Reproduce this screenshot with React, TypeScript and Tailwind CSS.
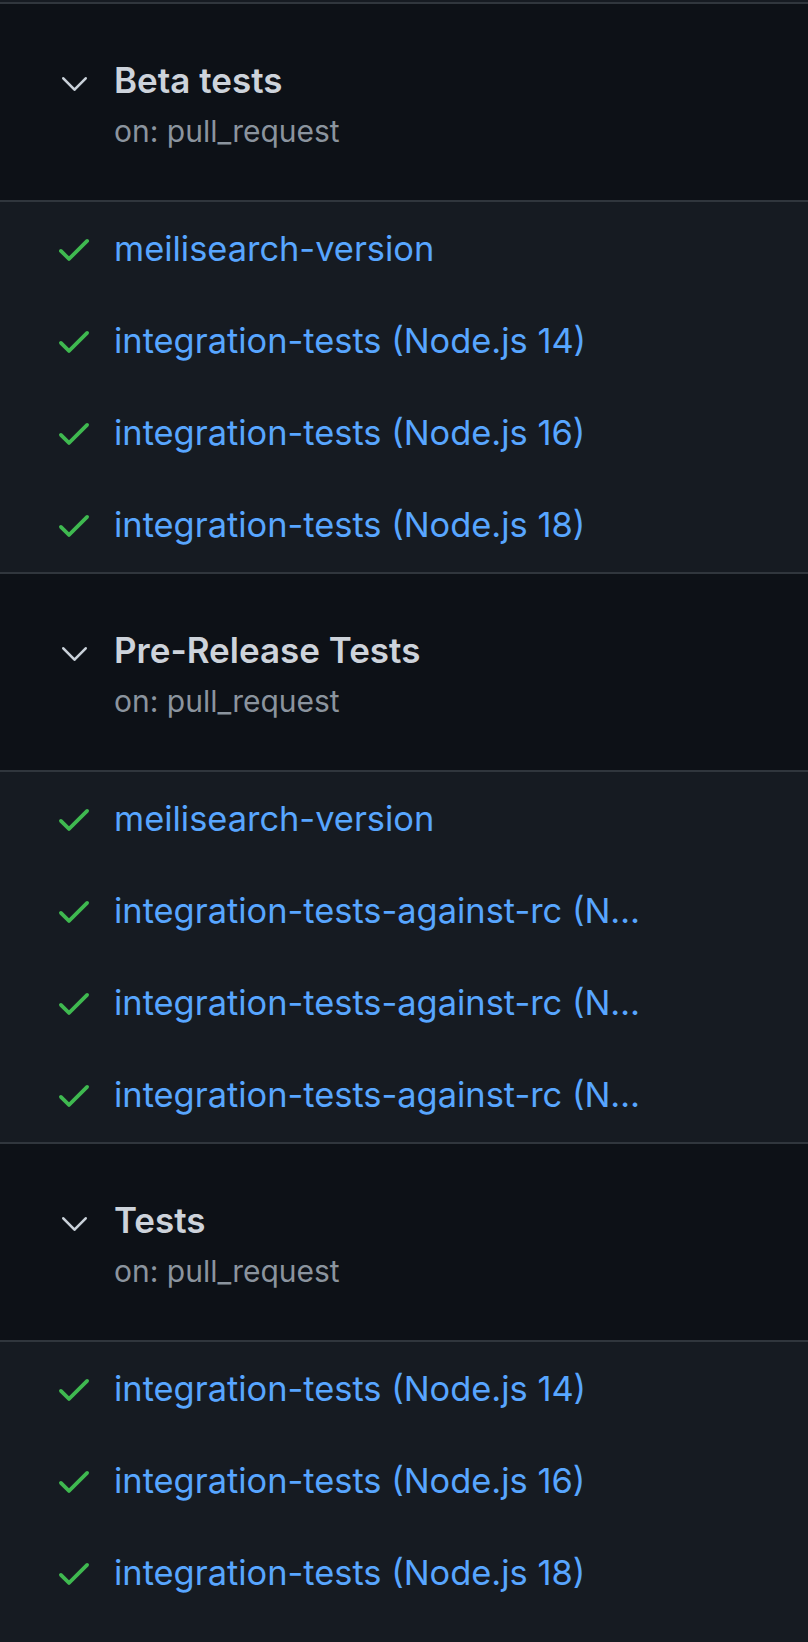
import React from 'react';

interface Workflow {
  name: string;
  event: string;
  jobs: string[];
}

const workflows: Workflow[] = [
  {
    name: 'Beta tests',
    event: 'on: pull_request',
    jobs: [
      'meilisearch-version',
      'integration-tests (Node.js 14)',
      'integration-tests (Node.js 16)',
      'integration-tests (Node.js 18)',
    ],
  },
  {
    name: 'Pre-Release Tests',
    event: 'on: pull_request',
    jobs: [
      'meilisearch-version',
      'integration-tests-against-rc (N…',
      'integration-tests-against-rc (N…',
      'integration-tests-against-rc (N…',
    ],
  },
  {
    name: 'Tests',
    event: 'on: pull_request',
    jobs: [
      'integration-tests (Node.js 14)',
      'integration-tests (Node.js 16)',
      'integration-tests (Node.js 18)',
    ],
  },
];

const CheckIcon = () => (
  <svg width="40" height="40" viewBox="0 0 16 16" fill="#3fb950" className="shrink-0">
    <path d="M13.78 4.22a.75.75 0 0 1 0 1.06l-7.25 7.25a.75.75 0 0 1-1.06 0L2.22 9.28a.751.751 0 0 1 .018-1.042.751.751 0 0 1 1.042-.018L6 10.94l6.72-6.72a.75.75 0 0 1 1.06 0Z" />
  </svg>
);

const ChevronDown = () => (
  <svg width="40" height="20" viewBox="0 0 40 20" fill="none" className="shrink-0">
    <polyline
      points="9.3,4.3 20.5,15.7 31.7,4.3"
      stroke="#c9d1d9"
      strokeWidth="2.6"
      strokeLinecap="round"
      strokeLinejoin="round"
    />
  </svg>
);

const WorkflowSection: React.FC<{ workflow: Workflow }> = ({ workflow }) => (
  <div>
    <div className="flex h-[198px] border-t-2 border-[#30363d] bg-[#0d1117] pl-[54px]">
      <div className="w-10 pt-[70px]">
        <ChevronDown />
      </div>
      <div className="ml-[20px] flex flex-col pt-[56px]">
        <h2 className="text-[35px] font-semibold leading-[40px] text-[#cdd3db]">{workflow.name}</h2>
        <p className="mt-[13px] text-[30px] leading-[36px] text-[#8b949e]">{workflow.event}</p>
      </div>
    </div>
    <div className="border-t-2 border-[#30363d] bg-[#161b22] py-[1px]">
      {workflow.jobs.map((job, i) => (
        <div key={i} className="flex h-[92px] items-center pl-[54px]">
          <CheckIcon />
          <a className="ml-[20px] max-w-[540px] truncate text-[34.4px] leading-[40px] text-[#58a6ff]">{job}</a>
        </div>
      ))}
    </div>
  </div>
);

export default function App() {
  return (
    <div className="min-h-screen bg-[#161b22]" style={{ fontFamily: 'Inter, "Noto Sans", sans-serif' }}>
      <div className="h-[2px] bg-[#161b22]" />
      {workflows.map(w => (
        <WorkflowSection key={w.name} workflow={w} />
      ))}
    </div>
  );
}
